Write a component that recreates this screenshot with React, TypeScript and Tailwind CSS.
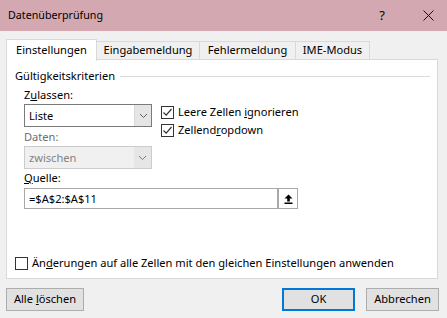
import React from "react";

const font = { fontFamily: '"Noto Sans", "Open Sans", sans-serif' };

function Chevron({ color = "#606060" }: { color?: string }) {
  return (
    <svg width="9" height="6" viewBox="0 0 9 6">
      <path d="M1 1 L4.5 4.5 L8 1" fill="none" stroke={color} strokeWidth="1" />
    </svg>
  );
}

function Check({ checked }: { checked: boolean }) {
  return (
    <span className="w-[13px] h-[13px] border border-[#333333] bg-white flex items-center justify-center shrink-0">
      {checked && (
        <svg width="11" height="11" viewBox="0 0 11 11">
          <path d="M1.5 5.5 L4.2 8.2 L9.5 2" fill="none" stroke="#333333" strokeWidth="1.2" />
        </svg>
      )}
    </span>
  );
}

function Tab({ label, width, active }: { label: string; width: string; active?: boolean }) {
  return active ? (
    <div className={`${width} h-[22px] bg-white border border-b-0 border-[#d9d9d9] flex items-center justify-center text-black relative top-px -mb-px z-10`}>
      {label}
    </div>
  ) : (
    <div className={`${width} h-[18px] bg-[#f0f0f0] border border-b-0 border-l-0 border-[#d9d9d9] flex items-center justify-center text-black`}>
      {label}
    </div>
  );
}

export default function App() {
  return (
    <div className="w-[447px] h-[318px] bg-[#f0f0f0] overflow-hidden text-[11.1px] text-black" style={font}>
      <div className="h-[31px] bg-[#d4a8b1] flex items-center pl-[8px] pr-[13px]">
        <span className="flex-1 text-[10.7px]">Datenüberprüfung</span>
        <span className="mr-[38px] text-[13px]">?</span>
        <svg width="11" height="11" viewBox="0 0 11 11">
          <path d="M0.5 0.5 L10.5 10.5 M10.5 0.5 L0.5 10.5" stroke="#111" strokeWidth="1" />
        </svg>
      </div>

      <div className="flex items-end pl-[6px] mt-[7px] h-[21px]">
        <Tab label="Einstellungen" width="w-[91px]" active />
        <Tab label="Eingabemeldung" width="w-[103px]" />
        <Tab label="Fehlermeldung" width="w-[96px]" />
        <Tab label="IME-Modus" width="w-[74px]" />
      </div>

      <div className="ml-[6px] w-[432px] h-[220px] bg-white border border-[#d9d9d9]">
        <div className="flex items-center pl-[8px] pr-[7px] mt-[8px] h-[16px]">
          <span>Gültigkeitskriterien</span>
          <div className="flex-1 h-px bg-[#dcdcdc] ml-[5px]" />
        </div>

        <div className="pl-[17px] mt-[3px]">
          <div className="h-[16px] leading-[16px]">
            Z<span className="underline">u</span>lassen:
          </div>
          <div className="flex items-start h-[23px] mt-[1px]">
            <div className="w-[128px] h-[23px] border border-[#7a7a7a] bg-white flex shrink-0">
              <span className="flex-1 pl-[4px] leading-[21px]">Liste</span>
              <span className="w-[17px] h-[21px] bg-[#e5e5e5] border-l border-[#dadada] flex items-center justify-center">
                <Chevron />
              </span>
            </div>
            <div className="ml-[9px] pt-[2px] flex flex-col gap-[5px]">
              <div className="flex items-center gap-[4px] h-[13px]">
                <Check checked />
                <span>
                  Leere Zellen <span className="underline">i</span>gnorieren
                </span>
              </div>
              <div className="flex items-center gap-[4px] h-[13px]">
                <Check checked />
                <span>
                  Zellend<span className="underline">r</span>opdown
                </span>
              </div>
            </div>
          </div>

          <div className="h-[16px] leading-[16px] mt-[2px] text-[#6d6d6d]">Daten:</div>
          <div className="w-[128px] h-[23px] border border-[#cccccc] bg-[#f0f0f0] flex mt-px">
            <span className="flex-1 pl-[4px] leading-[21px] text-[#838383]">zwischen</span>
            <span className="w-[17px] h-[21px] bg-[#e6e6e6] flex items-center justify-center">
              <Chevron color="#7a7a7a" />
            </span>
          </div>

          <div className="h-[16px] leading-[16px] mt-px">
            <span className="underline">Q</span>uelle:
          </div>
          <div className="w-[274px] h-[21px] border border-[#a9a9a9] bg-white flex mt-[2px]">
            <span className="flex-1 pl-[4px] leading-[19px]">=$A$2:$A$11</span>
            <span className="w-[20px] h-[19px] border-l-2 border-[#a9a9a9] bg-white flex items-center justify-center">
              <svg width="9" height="10" viewBox="0 0 9 10">
                <path d="M4.5 0.5 L8.5 4.5 L5.8 4.5 L5.8 7.5 L3.2 7.5 L3.2 4.5 L0.5 4.5 Z" fill="#000" />
                <rect x="0.5" y="8.5" width="8" height="1.5" fill="#000" />
              </svg>
            </span>
          </div>
        </div>

        <div className="flex items-center gap-[4px] pl-[8px] mt-[47px] h-[14px]">
          <Check checked={false} />
          <span>
            Än<span className="underline">d</span>erungen auf alle Zellen mit den gleichen Einstellungen anwenden
          </span>
        </div>
      </div>

      <div className="flex items-center mt-[9px] pl-[6px] pr-[8px]">
        <button className="w-[78px] h-[23px] bg-[#e1e1e1] border border-[#adadad]">
          Alle <span className="underline">l</span>öschen
        </button>
        <div className="flex-1" />
        <button className="w-[73px] h-[23px] bg-[#e1e1e1] border-2 border-[#0078d7]">OK</button>
        <button className="w-[73px] h-[23px] bg-[#e1e1e1] border border-[#adadad] ml-[11px]">
          Abbrechen
        </button>
      </div>
    </div>
  );
}
